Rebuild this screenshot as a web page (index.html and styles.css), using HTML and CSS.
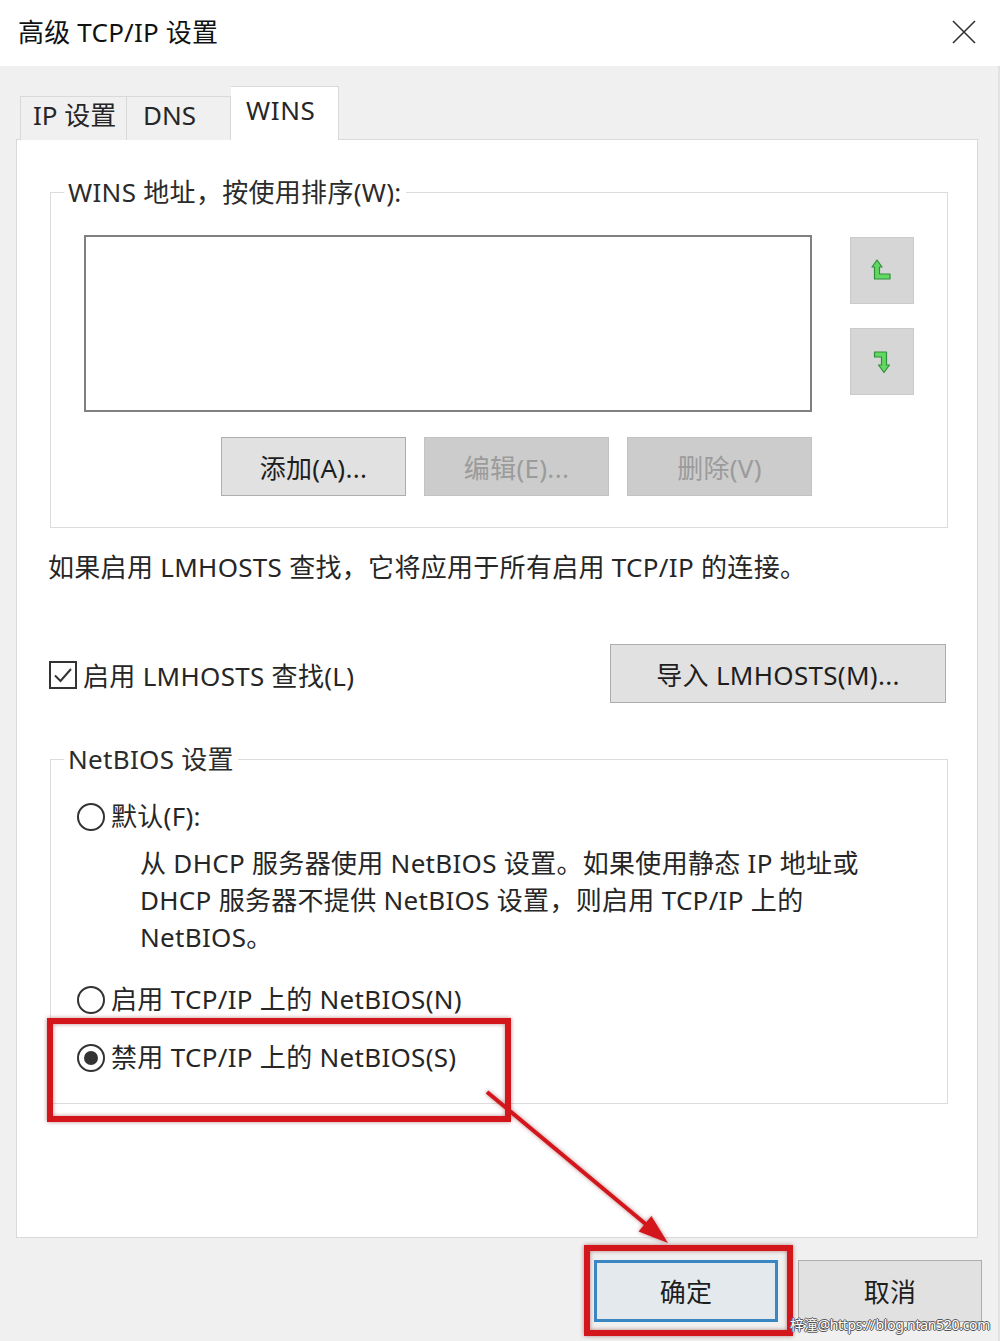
FILE: index.html
```html
<!DOCTYPE html>
<html lang="zh-CN">
<head>
    <meta charset="UTF-8">
    <meta name="viewport" content="width=device-width, initial-scale=1.0">
    <title>高级 TCP/IP 设置</title>
    <link rel="stylesheet" href="styles.css">
</head>
<body>
    <!-- Title bar -->
    <header class="titlebar">
        <span class="title">高级 TCP/IP 设置</span>
        <svg class="close" width="24" height="24" viewBox="0 0 24 24">
            <path d="M1 1 L23 23 M23 1 L1 23" stroke="#333" stroke-width="1.6" fill="none"/>
        </svg>
    </header>

    <main class="dialog">
        <div class="tabs">
            <div class="tab tab-ip">IP 设置</div>
            <div class="tab tab-dns">DNS</div>
            <div class="tab active">WINS</div>
        </div>

        <div class="panel">
            <fieldset class="group">
                <legend>WINS 地址，按使用排序(W):</legend>
                <div class="group-body wins-body">
                    <div class="list-row">
                        <div class="listbox"></div>
                        <div class="order-btns">
                            <button class="order-btn" disabled>
                                <svg width="24" height="24" viewBox="0 0 24 24">
                                    <path d="M6 1 L11 8 L8.5 8 L8.5 15 L19 15 L19 20 L3.5 20 L3.5 8 L1 8 Z" fill="#62d862" stroke="#2f8f3a" stroke-width="1.2" stroke-linejoin="round"/>
                                </svg>
                            </button>
                            <button class="order-btn down" disabled>
                                <svg width="24" height="24" viewBox="0 0 24 24">
                                    <path d="M3.5 2 L15.5 2 L15.5 15 L18.5 15 L13 22.5 L7.5 15 L10.5 15 L10.5 7 L3.5 7 Z" fill="#62d862" stroke="#2f8f3a" stroke-width="1.2" stroke-linejoin="round"/>
                                </svg>
                            </button>
                        </div>
                    </div>
                    <div class="list-actions">
                        <button class="btn">添加(A)...</button>
                        <button class="btn" disabled>编辑(E)...</button>
                        <button class="btn" disabled>删除(V)</button>
                    </div>
                </div>
            </fieldset>

            <p class="hint">如果启用 LMHOSTS 查找，它将应用于所有启用 TCP/IP 的连接。</p>

            <div class="lmhosts-row">
                <label class="check">
                    <span class="checkbox checked">
                        <svg width="24" height="24" viewBox="0 0 24 24">
                            <path d="M4 12.5 L9.5 18 L20 6" stroke="#333" stroke-width="2" fill="none"/>
                        </svg>
                    </span>
                    启用 LMHOSTS 查找(L)
                </label>
                <button class="btn btn-import">导入 LMHOSTS(M)...</button>
            </div>

            <fieldset class="group netbios">
                <legend>NetBIOS 设置</legend>
                <div class="group-body netbios-body">
                    <label class="radio-row"><span class="radio"></span>默认(F):</label>
                    <p class="desc">从 DHCP 服务器使用 NetBIOS 设置。如果使用静态 IP 地址或<br>DHCP 服务器不提供 NetBIOS 设置，则启用 TCP/IP 上的<br>NetBIOS。</p>
                    <label class="radio-row row-enable"><span class="radio"></span>启用 TCP/IP 上的 NetBIOS(N)</label>
                    <label class="radio-row row-disable"><span class="radio checked"></span>禁用 TCP/IP 上的 NetBIOS(S)</label>
                </div>
            </fieldset>
        </div>

        <div class="footer">
            <button class="btn btn-footer btn-ok">确定</button>
            <button class="btn btn-footer">取消</button>
        </div>
    </main>

    <!-- Red annotation marks -->
    <svg class="marks" width="1000" height="1341" viewBox="0 0 1000 1341">
        <rect x="50" y="1021" width="458" height="98" fill="none" stroke="#d3161c" stroke-width="6"/>
        <rect x="587" y="1248" width="203" height="85" fill="none" stroke="#d3161c" stroke-width="6"/>
        <line x1="487" y1="1092" x2="648" y2="1226" stroke="#d3161c" stroke-width="4"/>
        <polygon points="668,1243 638.6,1231.5 651.4,1216.1" fill="#d3161c"/>
    </svg>

    <div class="watermark">梓潼@https://blog.ntan520.com</div>
</body>
</html>
```

FILE: styles.css
```css
* {
    box-sizing: border-box;
}

body {
    margin: 0;
    padding: 0;
    width: 1000px;
    height: 1341px;
    position: relative;
    overflow: hidden;
    font-family: "Noto Sans", "Noto Sans CJK SC", sans-serif;
    font-size: 26px;
    color: #262626;
    background-color: #f0f0f0;
}

/* Title bar */
.titlebar {
    height: 66px;
    background: #fff;
    display: flex;
    align-items: center;
    justify-content: space-between;
    padding: 0 24px 0 18px;
}

.title {
    color: #111;
    line-height: 1;
    margin-top: -2px;
    letter-spacing: 0.2px;
}

.close {
    display: block;
    margin-top: -2px;
}

/* Dialog body */
.dialog {
    height: 1275px;
    padding: 20px 20px 0 16px;
    border-right: 2px solid #e2e2e2;
}

.tabs {
    display: flex;
    align-items: flex-end;
    margin-left: 4px;
    margin-bottom: -1px;
    position: relative;
    z-index: 1;
}

.tab {
    height: 44px;
    width: 107px;
    line-height: 36px;
    padding-left: 12px;
    border: 1px solid #d9d9d9;
    border-bottom: none;
    background: #f0f0f0;
    white-space: nowrap;
}

.tab-dns {
    width: 104px;
    padding-left: 16px;
    border-left: none;
}

.tab.active {
    height: 54px;
    width: 108px;
    line-height: 46px;
    padding-left: 15px;
    background: #fff;
    border-left: none;
    letter-spacing: 0.6px;
}

.panel {
    height: 1099px;
    background: #fff;
    border: 1px solid #d9d9d9;
    padding: 34px 29px 0 33px;
    letter-spacing: 0.3px;
}

/* Group boxes */
.group {
    margin: 0;
    padding: 0;
    border: 1px solid #dcdcdc;
}

.group legend {
    margin-left: 13px;
    padding: 0 4px;
    line-height: 36px;
    color: #2b2b2b;
}

.wins-body {
    padding: 25px 33px 31px 33px;
}

.list-row {
    display: flex;
    gap: 38px;
}

.listbox {
    width: 728px;
    height: 177px;
    border: 2px solid #808080;
    background: #fff;
}

.order-btns {
    display: flex;
    flex-direction: column;
    gap: 24px;
    padding-top: 2px;
}

.order-btn {
    width: 64px;
    height: 67px;
    padding: 0;
    border: 1px solid #cacaca;
    background: #d6d6d6;
    display: flex;
    align-items: center;
    justify-content: center;
}

.order-btn svg {
    display: block;
    margin-left: 2px;
}

.list-actions {
    width: 728px;
    margin-top: 25px;
    display: flex;
    justify-content: flex-end;
    gap: 18px;
}

.btn {
    font-family: inherit;
    font-size: 26px;
    letter-spacing: 0.3px;
    color: #1e1e1e;
    width: 185px;
    height: 59px;
    padding: 0;
    background: #e1e1e1;
    border: 1px solid #adadad;
}

.btn:disabled {
    background: #cccccc;
    border-color: #c2c2c2;
    color: #9b9b9b;
}

.hint {
    margin: 21px 0 0 -2px;
    line-height: 37px;
}

.lmhosts-row {
    margin-top: 58px;
    display: flex;
    align-items: center;
    justify-content: space-between;
    margin-right: 2px;
}

.check {
    display: flex;
    align-items: center;
    gap: 6px;
    margin-left: -1px;
    margin-top: 2px;
}

.checkbox {
    width: 28px;
    height: 28px;
    border: 2px solid #333;
    display: flex;
    align-items: center;
    justify-content: center;
}

.btn-import {
    width: 336px;
}

.netbios {
    margin-top: 38px;
}

.netbios-body {
    padding: 21px 26px 27px 26px;
}

.radio-row {
    display: flex;
    align-items: center;
    gap: 6px;
    line-height: 37px;
}

.radio {
    width: 28px;
    height: 28px;
    border: 2px solid #333;
    border-radius: 50%;
    display: flex;
    align-items: center;
    justify-content: center;
}

.radio.checked::after {
    content: "";
    width: 14px;
    height: 14px;
    border-radius: 50%;
    background: #333;
}

.desc {
    margin: 10px 0 0 63px;
    line-height: 37px;
}

.row-enable {
    margin-top: 25px;
}

.row-disable {
    margin-top: 21px;
}

/* Bottom buttons */
.footer {
    margin-top: 22px;
    margin-right: -4px;
    display: flex;
    justify-content: flex-end;
    gap: 20px;
}

.btn-footer {
    width: 184px;
    height: 62px;
}

.btn-ok {
    border: 3px solid #3a86c3;
    background: #e4e9ee;
}

/* Annotations */
.marks {
    position: absolute;
    left: 0;
    top: 0;
    pointer-events: none;
    filter: drop-shadow(0 0 2px rgba(110, 0, 0, 0.45));
}

.watermark {
    position: absolute;
    left: 790px;
    top: 1315px;
    font-size: 14px;
    letter-spacing: -0.3px;
    line-height: 20px;
    color: #fff;
    text-shadow: -1px 0 #555, 1px 0 #555, 0 -1px #555, 0 1px #555;
    white-space: nowrap;
}
```
